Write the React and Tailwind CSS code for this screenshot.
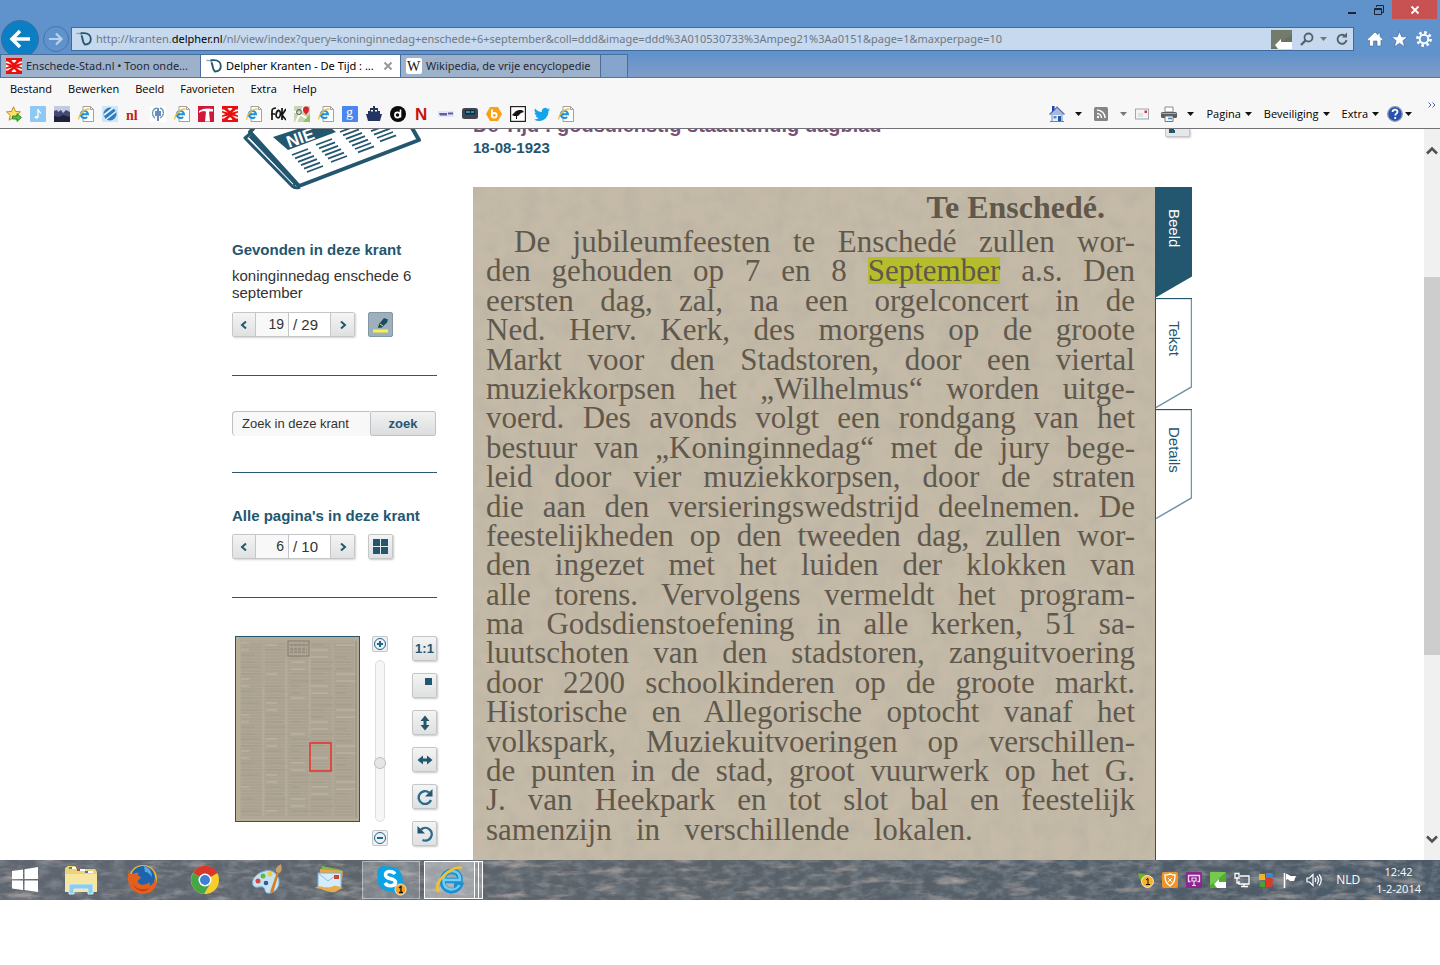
import { useState } from 'react';
import clsx from 'clsx';

const FAVORITES = [
  'star', 'note', 'photo', 'ie', 'swirl', 'nl', 'tree', 'ie', 'tred', 'cross', 'ie', 'fok',
  'maps', 'ie', 'google', 'ship', 'disc', 'nred', 'band', 'tv', 'hex', 'bird', 'twitter', 'ie',
];

const ARTICLE = [
  'den gehouden op 7 en 8 |September| a.s. Den',
  'eersten dag, zal, na een orgelconcert in de',
  'Ned. Herv. Kerk, des morgens op de groote',
  'Markt voor den Stadstoren, door een viertal',
  'muziekkorpsen het „Wilhelmus“ worden uitge-',
  'voerd. Des avonds volgt een rondgang van het',
  'bestuur van „Koninginnedag“ met de jury bege-',
  'leid door vier muziekkorpsen, door de straten',
  'die aan den versieringswedstrijd deelnemen. De',
  'feestelijkheden op den tweeden dag, zullen wor-',
  'den ingezet met het luiden der klokken van',
  'alle torens. Vervolgens vermeldt het program-',
  'ma Godsdienstoefening in alle kerken, 51 sa-',
  'luutschoten van den stadstoren, zanguitvoering',
  'door 2200 schoolkinderen op de groote markt.',
  'Historische en Allegorische optocht vanaf het',
  'volkspark, Muziekuitvoeringen op verschillen-',
  'de punten in de stad, groot vuurwerk op het G.',
  'J. van Heekpark en tot slot bal en feestelijk',
];

function IeMark() {
  return (
    <>
      <path d="M5 .5h7.500l3 3V15.500H5z" fill="#fdfdfd" stroke="#8c8c8c" strokeWidth=".8" />
      <path d="M12.500 .5v3h3" fill="none" stroke="#8c8c8c" strokeWidth=".8" />
      <path d="M3.200 8.300h6.800a3.600 3.600 0 1 0-.9 2.600" fill="none" stroke="#1e8fd8" strokeWidth="2" />
      <path d="M1 13.500C-.5 10 6 2.500 11.500 3" fill="none" stroke="#f0c030" strokeWidth="1.300" />
    </>
  );
}

function CrossMark() {
  return (
    <>
      <rect width="16" height="16" fill="#e8100c" />
      <path d="M0 3.500h2L6 6.500 0 5zM16 3.500h-2L10 6.500 16 5zM0 12.500h2L6 9.500 0 11zM16 12.500h-2L10 9.500l6 1.500z" fill="#fff" />
      <path d="M5.500 2h5L9 4.500H7zM5.500 14h5L9 11.500H7zM0 6.500L3.500 8 0 9.500zM16 6.500L12.500 8 16 9.500z" fill="#fff" />
    </>
  );
}

function FavIcon({ kind }) {
  return (
    <svg viewBox="0 0 16 16" className="size-4" aria-hidden="true">
      {kind === 'ie' && <IeMark />}
      {kind === 'star' && (
        <>
          <path d="M7.500 .8l2 4.600 5 .5-3.700 3.400 1 4.900-4.300-2.500-4.400 2.500 1.100-4.900L.5 5.900l5-.5z" fill="#fbe06a" stroke="#c78a1e" />
          <path d="M6.500 10h4.500V7.500l4.500 4-4.500 4V13H6.500z" fill="#4fc23a" stroke="#217a1c" strokeWidth=".8" />
        </>
      )}
      {kind === 'note' && (
        <>
          <rect width="16" height="16" rx="1" fill="#8ec8f4" />
          <path d="M8 3v8M8 3.500c.5 2 2.500 2 2.500 4" stroke="#fff" strokeWidth="1.300" fill="none" />
          <ellipse cx="6.600" cy="11.300" rx="1.800" ry="1.400" fill="#fff" />
        </>
      )}
      {kind === 'photo' && (
        <>
          <rect width="16" height="16" fill="#c3cbe4" />
          <path d="M0 5l3-1 1 2 3-2 2 3 3-3 4 2v10H0z" fill="#434a72" />
          <path d="M0 10l5 1 4-2 7 2v5H0z" fill="#20213a" />
        </>
      )}
      {kind === 'swirl' && (
        <>
          <rect width="16" height="16" rx="1" fill="#cfe6f6" />
          <circle cx="8" cy="8" r="6.500" fill="#2d7fc4" />
          <path d="M2 9L11 2M4 13.500l10-8" stroke="#e8f4fc" strokeWidth="1.600" />
        </>
      )}
      {kind === 'nl' && <text x="0" y="14" fontSize="14" fontWeight="700" fontFamily='"Liberation Serif", serif' fill="#c41f16">nl</text>}
      {kind === 'tree' && (
        <>
          <rect width="16" height="16" fill="#fff" />
          <path d="M5 12C1 9 2 3 7 2M10 12c5-3 4-9 0-10" stroke="#5da0bd" strokeWidth="1.300" fill="none" />
          <path d="M8 2v13M6 5v5M10 5v5" stroke="#35589a" strokeWidth="1.400" />
        </>
      )}
      {kind === 'tred' && (
        <>
          <rect width="16" height="16" fill="#d3173b" />
          <path d="M1 5c4-3 9-3 14-2v2.500h-4l1 10H7l1-10C5 5 3 5 1 7z" fill="#fff" />
        </>
      )}
      {kind === 'cross' && <CrossMark />}
      {kind === 'fok' && (
        <path d="M2 14V5c0-2 2-3 4-3M1 8h4M7 5c3-2 4 2 3 5s-4 2-4-1 1-4 3-5M12 2v12M16 3l-4 6 4 5" fill="none" stroke="#151515" strokeWidth="1.700" />
      )}
      {kind === 'maps' && (
        <>
          <rect width="16" height="16" rx="1" fill="#c9d4b0" />
          <path d="M0 5l16 9M2 16L10 0" stroke="#fff" strokeWidth="2" />
          <path d="M9 16l7-8v8z" fill="#8ec26b" />
          <path d="M12 9c-1-2-3-3-3-5.500a3 3 0 0 1 6 0C15 6 13 7 12 9z" fill="#d8232a" />
          <circle cx="5" cy="6" r="2.300" fill="none" stroke="#5d6b6f" strokeWidth="1.200" />
        </>
      )}
      {kind === 'google' && (
        <>
          <rect width="16" height="16" rx="1" fill="#4a86ef" />
          <text x="4" y="11" fontSize="14" fontFamily='"Liberation Serif", serif' fill="#fff">g</text>
        </>
      )}
      {kind === 'ship' && <path d="M7 0h2v2h3v3h2v3h2l-2 7H2L0 8h2V5h2V2h3zM5 4v1.500h2V4zm4 0v1.500h2V4z" fill="#233463" fillRule="evenodd" />}
      {kind === 'disc' && (
        <>
          <circle cx="8" cy="8" r="8" fill="#0a0a0a" />
          <circle cx="7.500" cy="9" r="2.600" fill="none" stroke="#fff" strokeWidth="1.600" />
          <path d="M10.500 3.500v8" stroke="#fff" strokeWidth="1.600" />
        </>
      )}
      {kind === 'nred' && <text x="1" y="14" fontSize="17" fontWeight="700" fontFamily='"Liberation Sans", sans-serif' fill="#c4150f">N</text>}
      {kind === 'band' && (
        <>
          <rect y="5" width="16" height="6" fill="#e4e4f2" />
          <path d="M1 7h8v2.500H2zM10 6.500h5v2h-5z" fill="#5d5fa9" />
        </>
      )}
      {kind === 'tv' && (
        <>
          <rect y="2" width="16" height="11" rx="2.500" fill="#3f4650" />
          <rect x="3" y="4" width="10" height="4.500" fill="#0d2b3a" />
          <path d="M4 6h4M9 6h3" stroke="#35b6e4" strokeWidth="1.500" />
        </>
      )}
      {kind === 'hex' && (
        <>
          <path d="M4 1h8l4 7-4 7H4L0 8z" fill="#f7a11a" />
          <path d="M6 3.500v8" stroke="#fff" strokeWidth="1.800" />
          <circle cx="8.300" cy="9.300" r="2.300" fill="none" stroke="#fff" strokeWidth="1.800" />
        </>
      )}
      {kind === 'bird' && (
        <>
          <rect x=".6" y=".6" width="14.800" height="14.800" fill="#fff" stroke="#222" strokeWidth="1.200" />
          <path d="M2 9l4-4 3-1h3l2 2-3 1-3 3H7v3H6v-3H4z" fill="#151515" />
        </>
      )}
      {kind === 'twitter' && (
        <path d="M16 3.400c-.6.3-1.200.4-1.900.5.700-.4 1.200-1 1.400-1.800-.6.400-1.300.6-2 .8A3.300 3.300 0 0 0 7.900 6 9.300 9.300 0 0 1 1.100 2.500a3.300 3.300 0 0 0 1 4.400c-.5 0-1-.2-1.500-.4 0 1.600 1.100 2.900 2.600 3.200-.5.100-1 .2-1.500.1.400 1.300 1.600 2.200 3.100 2.300A6.600 6.600 0 0 1 0 13.400 9.300 9.300 0 0 0 14.400 5.100c.6-.5 1.200-1 1.600-1.700z" fill="#17a4e6" />
      )}
    </svg>
  );
}

function DelpherMark() {
  return (
    <svg viewBox="0 0 16 16" className="size-4 shrink-0" aria-hidden="true">
      <path d="M.5 2.500C4 2 6 3 6.500 6c.3 3 1 6 2.500 7" fill="none" stroke="#7fa6b5" strokeWidth="1.400" />
      <path d="M4.500 2.200h3.500c4 0 6.800 2 6.800 5.800 0 3.500-2.500 5.500-6 5.500C6.500 12 7 8 5.500 4.500" fill="none" stroke="#23566f" strokeWidth="1.800" />
    </svg>
  );
}

function Caret({ muted }) {
  return (
    <svg viewBox="0 0 7 4" className="h-1 w-[7px] shrink-0" aria-hidden="true">
      <path d="M0 0h7L3.500 4z" fill={muted ? '#777' : '#111'} />
    </svg>
  );
}

function BrowserHeader() {
  return (
    <header className="relative shrink-0 bg-[#6092cb]">
      <div className="absolute right-[3px] top-0 flex">
        <button type="button" aria-label="Minimaliseren" className="flex h-[19px] w-[26px] items-center justify-center">
          <svg viewBox="0 0 12 12" className="size-3"><path d="M2 9h8" stroke="#1c2530" strokeWidth="2" /></svg>
        </button>
        <button type="button" aria-label="Verkleinen" className="flex h-[19px] w-[27px] items-center justify-center">
          <svg viewBox="0 0 12 12" className="size-3" fill="none" stroke="#1c2530">
            <path d="M1.500 4.500h7v6h-7zM1.500 5.500h7M3.500 3V1.500h7v7H9" />
          </svg>
        </button>
        <button type="button" aria-label="Sluiten" className="flex h-[19px] w-[45px] items-center justify-center bg-[#c85151]">
          <svg viewBox="0 0 10 10" className="size-2.5"><path d="M1.500 1.500l7 7M8.500 1.500l-7 7" stroke="#fff" strokeWidth="1.800" /></svg>
        </button>
      </div>

      <div className="flex h-[54px] items-end pb-[3px]">
        <div className="flex h-6 w-[71px] shrink-0 items-center gap-1 pl-px">
          <button type="button" aria-label="Terug" className="flex size-[38px] shrink-0 items-center justify-center rounded-full border border-[#3c6c9f] bg-[#0b7fc4]">
            <svg viewBox="0 0 24 24" className="size-6" fill="none" stroke="#fff" strokeWidth="3.500">
              <path d="M22 12H4M12 4l-8 8 8 8" />
            </svg>
          </button>
          <button type="button" aria-label="Vooruit" className="flex size-[26px] shrink-0 items-center justify-center rounded-full border border-[#4676ad]">
            <svg viewBox="0 0 16 16" className="size-4" fill="none" stroke="#b9d2ec" strokeWidth="2.200">
              <path d="M1 8h12M8 2.500L13.500 8 8 13.500" />
            </svg>
          </button>
        </div>
        <div className="flex h-6 min-w-0 flex-1 items-center border border-[#40699c] bg-[#c6d9ee] pl-1 font-['Noto_Sans',sans-serif] text-[11px] text-[#6e7884]">
          <DelpherMark />
          <div role="textbox" aria-label="Adres" className="ml-1 min-w-0 flex-1 truncate">
            http://kranten.<span className="text-black">delpher.nl</span>/nl/view/index?query=koninginnedag+enschede+6+september&amp;coll=ddd&amp;image=ddd%3A010530733%3Ampeg21%3Aa0151&amp;page=1&amp;maxperpage=10
          </div>
          <svg viewBox="0 0 21 19" className="mr-2 h-[19px] w-[21px]" aria-hidden="true">
            <rect width="21" height="19" fill="#69725f" />
            <path d="M0 0h21v4L4 17H0z" fill="#737c6c" />
            <path d="M4 15l6-6v3h11v7H7z" fill="#fff" />
          </svg>
          <button type="button" aria-label="Zoeken" className="flex items-center gap-1.5">
            <svg viewBox="0 0 14 14" className="size-3.5" fill="none" stroke="#56616e" strokeWidth="1.800">
              <circle cx="8.500" cy="5.500" r="4" />
              <path d="M5.500 8.500L1 13" strokeWidth="2.400" />
            </svg>
            <Caret muted />
          </button>
          <button type="button" aria-label="Vernieuwen" className="ml-2 mr-1">
            <svg viewBox="0 0 14 14" className="size-3.5" fill="none" stroke="#56616e" strokeWidth="1.900">
              <path d="M11.500 8A4.500 4.500 0 1 1 9.500 3.500" />
              <path d="M12 .5v5H7z" fill="#56616e" stroke="none" />
            </svg>
          </button>
        </div>
        <div className="flex h-6 w-[86px] shrink-0 items-center justify-end gap-2 pr-2">
          <button type="button" aria-label="Startpagina">
            <svg viewBox="0 0 16 16" className="size-4" fill="#fff" stroke="#3c6699" strokeWidth=".6">
              <path d="M8 1l3 2.800V2h2v3.600l3 2.900-1.300 1.300L14 9v6h-4v-5H6.500v5H2.500V9l-1 .8L0 8.500z" />
            </svg>
          </button>
          <button type="button" aria-label="Favorieten">
            <svg viewBox="0 0 16 16" className="size-[17px]" fill="#fff" stroke="#3c6699" strokeWidth=".6">
              <path d="M8 .5l2.100 5h5.600l-4.500 3.600 1.700 5.900L8 11.500 3.100 15l1.700-5.900L.3 5.500h5.600z" />
            </svg>
          </button>
          <button type="button" aria-label="Instellingen">
            <svg viewBox="0 0 16 16" className="size-4" fill="none" stroke="#fff">
              <circle cx="8" cy="8" r="4.300" strokeWidth="2" />
              <circle cx="8" cy="8" r="6.600" strokeWidth="2.600" strokeDasharray="2.600 2.580" />
            </svg>
          </button>
        </div>
      </div>

      <div className="relative flex h-6 border-b border-[#4a78ae] bg-linear-to-b from-[#6092cb] to-[#809cc6] font-['Noto_Sans',sans-serif] text-[11px] text-[#1f2a36]" role="tablist">
        <button type="button" role="tab" className="flex w-[201px] items-center gap-1 border border-b-0 border-[#466f9e] bg-[#9eb1cb] pl-[5px]">
          <svg viewBox="0 0 16 16" className="size-4 shrink-0" aria-hidden="true"><CrossMark /></svg>
          <span>Enschede-Stad.nl • Toon onde...</span>
        </button>
        <div className="flex w-[199px] items-center border-t border-[#466f9e] bg-white pl-[5px] pr-1 text-black">
          <button type="button" role="tab" aria-selected="true" className="flex flex-1 items-center gap-1 whitespace-nowrap">
            <DelpherMark />
            <span>Delpher Kranten - De Tijd : ...</span>
          </button>
          <button type="button" aria-label="Tabblad sluiten" className="p-1">
            <svg viewBox="0 0 8 8" className="size-2"><path d="M.5 .5l7 7M7.500 .5l-7 7" stroke="#999" strokeWidth="2" /></svg>
          </button>
        </div>
        <button type="button" role="tab" className="flex w-[201px] items-center gap-1 border border-b-0 border-[#466f9e] bg-[#9eb1cb] pl-[5px]">
          <svg viewBox="0 0 16 16" className="size-4 shrink-0" aria-hidden="true">
            <rect width="16" height="16" rx="2" fill="#fff" />
            <text x="1" y="13" fontSize="14" fontFamily='"Liberation Serif", serif' fill="#111">W</text>
          </svg>
          <span>Wikipedia, de vrije encyclopedie</span>
        </button>
        <button type="button" aria-label="Nieuw tabblad" className="w-[27px] border border-b-0 border-l-0 border-[#466f9e] bg-[#86a5cc]" />
      </div>

      <div className="border-b border-[#707278] bg-[#f7f7f7] text-[11px] text-black">
        <nav className="flex h-[22px] items-center gap-4 px-2.5">
          {['Bestand', 'Bewerken', 'Beeld', 'Favorieten', 'Extra', 'Help'].map((item) => (
            <button key={item} type="button">{item}</button>
          ))}
        </nav>
        <div className="flex h-7 items-center pl-1.5 pr-1">
          <div className="flex flex-1 gap-2">
            {FAVORITES.map((kind, i) => (
              <button key={i} type="button" aria-label={`Favoriet ${i + 1}`}><FavIcon kind={kind} /></button>
            ))}
          </div>
          <CommandBar />
        </div>
      </div>
    </header>
  );
}

function CommandBar() {
  return (
    <div className="flex items-center gap-3">
      <button type="button" aria-label="Startpagina" className="flex items-center gap-2.5">
        <svg viewBox="0 0 16 16" className="size-4">
          <path d="M3 8h10v7.500H3z" fill="#e8eefb" stroke="#7d8bb5" />
          <path d="M.5 8.500L8 1l7.500 7.500" fill="#a9b8e0" stroke="#5b6ca8" strokeWidth="1.200" />
          <path d="M3 0h2.500v4L3 6z" fill="#2741b0" />
          <path d="M9 10h3v5.500H9z" fill="#1c57a8" />
          <path d="M4.500 10h3v2.500h-3z" fill="#4f8fd9" />
          <path d="M1 15.500h14" stroke="#5d9b52" />
        </svg>
        <Caret />
      </button>
      <button type="button" aria-label="Feeds" className="flex items-center gap-3">
        <svg viewBox="0 0 14 14" className="size-3.5">
          <rect width="14" height="14" rx="1.500" fill="#858585" />
          <g fill="none" stroke="#fff" strokeWidth="1.500"><path d="M3 6.500a4.500 4.500 0 0 1 4.500 4.500M3 3a8 8 0 0 1 8 8" /></g>
          <circle cx="4" cy="10" r="1.200" fill="#fff" />
        </svg>
        <Caret muted />
      </button>
      <button type="button" aria-label="Mail" className="-ml-1">
        <svg viewBox="0 0 14 12" className="h-3 w-3.5">
          <rect x=".5" y="1" width="13" height="10" fill="#f4f4f6" stroke="#a3a6ac" />
          <path d="M3 6h5M3 8h5" stroke="#c8cdd6" />
          <rect x="9.500" y="2.500" width="2.500" height="2.500" fill="#d0353b" />
        </svg>
      </button>
      <button type="button" aria-label="Afdrukken" className="flex items-center gap-2.5">
        <svg viewBox="0 0 16 16" className="size-4">
          <path d="M4 1h8v5H4z" fill="#fff" stroke="#8a8a8a" />
          <rect y="6" width="16" height="6" rx="1.500" fill="#5a5d60" />
          <path d="M1 7.500h14" stroke="#a7abae" />
          <path d="M4 10h8v5.500H4z" fill="#f2f8ff" stroke="#777" />
          <path d="M7 12.500h4" stroke="#3a8fd0" strokeWidth="1.600" />
        </svg>
        <Caret />
      </button>
      {['Pagina', 'Beveiliging', 'Extra'].map((item) => (
        <button key={item} type="button" className="flex items-center gap-1">
          {item}
          <Caret />
        </button>
      ))}
      <button type="button" aria-label="Help" className="-ml-1 flex items-center gap-0.5">
        <svg viewBox="0 0 16 16" className="size-4">
          <circle cx="8" cy="8" r="7.300" fill="#2b50b4" stroke="#8d98ad" strokeWidth="1.300" />
          <path d="M5.500 6c0-3.300 5.200-3 5 0-.1 1.700-2.300 1.700-2.300 3.600M8.200 11v2" fill="none" stroke="#fff" strokeWidth="1.800" />
        </svg>
        <Caret />
      </button>
      <button type="button" aria-label="Meer" className="ml-1 self-start">
        <svg viewBox="0 0 8 6" className="-mt-1 h-1.5 w-2" fill="none" stroke="#5566a8"><path d="M.5 .5L3 3 .5 5.500M4.500 .5L7 3 4.500 5.500" /></svg>
      </button>
    </div>
  );
}

// [x, y] of the first rule in each printed column and how many rules it has
const PRINT_COLUMNS = [[60, 26, 6], [84, 16, 6], [108, 3, 7], [130, -8, 7]];

function NewspaperDrawing() {
  return (
    <svg viewBox="0 0 205 62" className="block h-[62px] w-[205px]" aria-hidden="true">
      <g fill="none" stroke="#23566f" strokeLinejoin="round">
        <path d="M26-6L18 3l49 54L187 11 176-8" strokeWidth="4" />
        <path d="M19 4l-6 5 47 48q3 3 8 1" strokeWidth="3" />
        <path d="M18 7l46 49" strokeWidth="4" />
      </g>
      <path d="M17 9l44 46" stroke="#fff" />
      <path d="M41 8l15 13 48-18L90-8z" fill="#23566f" />
      <text x="57" y="19" transform="rotate(-20 57 19)" fontSize="17" fontWeight="700" fontFamily='"Liberation Sans", sans-serif' fill="#fff">NIE</text>
      {PRINT_COLUMNS.map(([x, y, count]) =>
        Array.from({ length: count }, (_, i) => (
          <path key={`${x}-${i}`} d={`M${x + i * 3} ${y + i * 3.4}l16-6`} stroke="#23566f" strokeWidth="1.800" />
        ))
      )}
    </svg>
  );
}

const toolButton =
  'flex size-[25px] shrink-0 items-center justify-center rounded-xs border border-[#c4c6c8] bg-linear-to-b from-[#f4f4f4] to-[#dfe0e1] shadow-[1px_1px_2px_#c8c8c8]';

function Pager({ id, label, value, total, children }) {
  const [page, setPage] = useState(value);
  return (
    <div className="flex items-center gap-[13px]">
      <div className="flex h-[25px] w-[123px] rounded-xs border border-[#c4c6c8] text-[15px] text-[#333] shadow-[1px_1px_2px_#d4d4d4]">
        <button type="button" aria-label="Vorige" onClick={() => setPage(Math.max(1, page - 1))} className="flex w-[22px] items-center justify-center bg-linear-to-b from-[#f4f4f4] to-[#dfe0e1]">
          <svg viewBox="0 0 8 8" className="size-2" fill="none" stroke="#23566f" strokeWidth="2"><path d="M6 .5L2 4l4 3.500" /></svg>
        </button>
        <label htmlFor={id} className="sr-only">{label}</label>
        <input
          id={id}
          value={page}
          onChange={(e) => setPage(Number(e.target.value) || 1)}
          className="w-[34px] border-x border-[#c4c6c8] bg-[#f8f8f8] pr-1 text-right text-[14px] outline-none"
        />
        <span className="flex-1 pl-1 leading-[23px]">/ {total}</span>
        <button type="button" aria-label="Volgende" onClick={() => setPage(Math.min(total, page + 1))} className="flex w-6 items-center justify-center border-l border-[#c4c6c8] bg-linear-to-b from-[#f4f4f4] to-[#dfe0e1]">
          <svg viewBox="0 0 8 8" className="size-2" fill="none" stroke="#23566f" strokeWidth="2"><path d="M2 .5L6 4 2 7.500" /></svg>
        </button>
      </div>
      {children}
    </div>
  );
}

function Thumbnail() {
  const rules = Array.from({ length: 130 }, (_, i) => ({
    x: 5 + (i % 5) * 23 + ((i * 7) % 5),
    y: 6 + ((i * 37 + (i % 5) * 11) % 173),
    w: 8 + ((i * 13) % 15),
    light: i % 3 === 0,
  }));
  return (
    <a href="#pagina" aria-label="Paginaoverzicht" className="ml-[3px] block h-[186px] w-[125px] shrink-0 border border-[#23566f] bg-[#b5ac98]">
      <svg viewBox="0 0 123 184" className="block size-full">
        <rect x="4" y="3" width="117" height="179" fill="#b0a797" />
        <path d="M0 0h4v184H0zM0 182h123v2H0z" fill="#b8af95" />
        {Array.from({ length: 58 }, (_, i) => (
          <path key={i} d={`M6 ${7 + i * 3}h113`} stroke="#a69e8d" strokeDasharray="20 3" />
        ))}
        {rules.map((r, i) => (
          <path key={i} d={`M${r.x} ${r.y}h${r.w}`} stroke={r.light ? '#c0b8a7' : '#a39a8a'} />
        ))}
        <path d="M27 50v130M50 20v160M74 6v90" stroke="#b8af9f" />
        <path d="M120 4v176" stroke="#968c78" />
        <rect x="52" y="4" width="21" height="15" fill="none" stroke="#857b6c" />
        <path d="M54 8h17M54 12h17M54 15h17" stroke="#847b6d" strokeDasharray="3 1" />
        <rect x="74" y="106" width="21" height="28" fill="none" stroke="#e8312a" strokeWidth="1.500" />
      </svg>
    </a>
  );
}

function ZoomTools() {
  const [zoom, setZoom] = useState(65);
  return (
    <div className="mt-[38px] flex">
      <Thumbnail />
      <div className="ml-3 flex w-4 flex-col items-center gap-2">
        <button type="button" aria-label="Inzoomen" className="size-4 rounded-xs border border-[#c4c6c8] bg-[#eef0f1]">
          <svg viewBox="0 0 14 14" fill="none" stroke="#23668c"><circle cx="7" cy="7" r="5.500" /><path d="M7 4v6M4 7h6" strokeWidth="2" /></svg>
        </button>
        <label htmlFor="zoom" className="sr-only">Zoom</label>
        <input
          id="zoom"
          type="range"
          min="0"
          max="100"
          value={zoom}
          onChange={(e) => setZoom(Number(e.target.value))}
          className="h-[162px] w-3 appearance-none bg-transparent [writing-mode:vertical-lr] [&::-webkit-slider-runnable-track]:w-2.5 [&::-webkit-slider-runnable-track]:rounded-full [&::-webkit-slider-runnable-track]:border [&::-webkit-slider-runnable-track]:border-[#dedede] [&::-webkit-slider-runnable-track]:bg-[#f6f6f6] [&::-webkit-slider-thumb]:-ml-0.5 [&::-webkit-slider-thumb]:size-3 [&::-webkit-slider-thumb]:appearance-none [&::-webkit-slider-thumb]:rounded-full [&::-webkit-slider-thumb]:border [&::-webkit-slider-thumb]:border-[#bdbdbd] [&::-webkit-slider-thumb]:bg-[#e6e6e6]"
        />
        <button type="button" aria-label="Uitzoomen" className="size-4 rounded-xs border border-[#c4c6c8] bg-[#eef0f1]">
          <svg viewBox="0 0 14 14" fill="none" stroke="#23668c"><circle cx="7" cy="7" r="5.500" /><path d="M4 7h6" strokeWidth="2" /></svg>
        </button>
      </div>
      <div className="ml-6 flex flex-col gap-3">
        <button type="button" className={clsx(toolButton, 'text-[13px] font-bold text-[#23566f]')}>1:1</button>
        <button type="button" aria-label="Overzicht" className={toolButton}>
          <svg viewBox="0 0 16 16" className="size-4"><path d="M8 0h7v7H8z" fill="#23566f" /></svg>
        </button>
        <button type="button" aria-label="Hoogte passend" className={toolButton}>
          <svg viewBox="0 0 16 16" className="size-4"><path d="M8 .5L12.500 6h-3v4h3L8 15.500 3.500 10h3V6h-3z" fill="#23566f" /></svg>
        </button>
        <button type="button" aria-label="Breedte passend" className={toolButton}>
          <svg viewBox="0 0 16 16" className="size-4"><path d="M.5 8L6 3.500v3h4v-3L15.500 8 10 12.500v-3H6v3z" fill="#23566f" /></svg>
        </button>
        <button type="button" aria-label="Rechtsom draaien" className={toolButton}>
          <svg viewBox="0 0 16 16" className="size-4"><path d="M14 11A6.400 6.400 0 1 1 12 3.500" fill="none" stroke="#2a6a8c" strokeWidth="2.400" /><path d="M15.500 0v7.500H8z" fill="#23566f" /></svg>
        </button>
        <button type="button" aria-label="Linksom draaien" className={toolButton}>
          <svg viewBox="0 0 16 16" className="size-4"><path d="M5.500 14A6.400 6.400 0 1 0 4 3.500" fill="none" stroke="#2a6a8c" strokeWidth="2.400" /><path d="M.5 0v7.500H8z" fill="#23566f" /></svg>
        </button>
      </div>
    </div>
  );
}

function Sidebar() {
  return (
    <aside className="w-[205px] shrink-0 text-[15px] text-[#333]">
      <NewspaperDrawing />
      <h2 className="mt-[49px] font-bold leading-5 text-[#23566f]">Gevonden in deze krant</h2>
      <p className="mb-[11px] mt-[7px] leading-[17px]">koninginnedag enschede 6 september</p>
      <Pager id="hit" label="Resultaat" value={19} total={29}>
        <button type="button" aria-label="Markeren" className="flex size-[25px] items-center justify-center rounded-xs border border-[#8397a5] bg-[#9eb0bc]">
          <svg viewBox="0 0 18 18" className="size-[18px]">
            <path d="M1 13.500h15v3H1z" fill="#f6f24b" />
            <path d="M6 12l1-4 5-6 4 1.500-1 3-5 5z" fill="#1d4a63" />
            <path d="M8 8l3 2" stroke="#dfe65a" />
          </svg>
        </button>
      </Pager>
      <hr className="mt-[38px] border-[#2c5a73]" />
      <form className="mt-[35px] flex h-[25px] text-[13px]" onSubmit={(e) => e.preventDefault()}>
        <label htmlFor="zoek" className="sr-only">Zoek in deze krant</label>
        <input
          id="zoek"
          defaultValue="Zoek in deze krant"
          className="w-[138px] rounded-l-[4px] border border-b-0 border-r-0 border-[#c0c0c0] bg-[#f8f8f8] px-[9px] outline-none"
        />
        <button type="submit" className="w-[66px] rounded-xs border border-[#bfc1c3] bg-linear-to-b from-[#f2f2f2] to-[#dcdddf] font-bold text-[#23566f]">zoek</button>
      </form>
      <hr className="mt-9 border-[#2c5a73]" />
      <h2 className="mb-2 mt-[33px] font-bold leading-5 text-[#23566f]">Alle pagina's in deze krant</h2>
      <Pager id="page" label="Pagina" value={6} total={10}>
        <button type="button" aria-label="Alle pagina's" className={toolButton}>
          <svg viewBox="0 0 15 15" className="size-[15px]" fill="#23566f"><path d="M0 0h7v7H0zM8 0h7v7H8zM0 8h7v7H0zM8 8h7v7H8z" /></svg>
        </button>
      </Pager>
      <hr className="mt-[38px] border-[#2c5a73]" />
      <ZoomTools />
    </aside>
  );
}

function ArticleLine({ text }) {
  const [before, hit, after] = text.split('|');
  return (
    <span className="block h-[29px] whitespace-nowrap [text-align-last:justify]">
      {before}
      {hit && <mark className="inline-block h-[27px] bg-[#b6bd2c] leading-[27px] text-inherit">{hit}</mark>}
      {after}
    </span>
  );
}

function Grain({ id, frequency, matrix }) {
  return (
    <svg className="pointer-events-none absolute inset-0 size-full" aria-hidden="true">
      <filter id={id} x="0" y="0" width="100%" height="100%">
        <feTurbulence type="fractalNoise" baseFrequency={frequency} numOctaves="4" seed="4" />
        <feColorMatrix values={matrix} />
      </filter>
      <rect width="100%" height="100%" filter={`url(#${id})`} />
    </svg>
  );
}

function Scan() {
  return (
    <article className="relative h-[674px] w-[682px] shrink-0 overflow-hidden bg-[#c4baa7] font-['Liberation_Serif',serif] text-[31px] text-[#61584c]">
      <Grain id="paper" frequency="0.06" matrix="0 0 0 0 .42  0 0 0 0 .38  0 0 0 0 .34  .6 0 0 0 -.22" />
      <div className="relative pl-[13px] pr-5">
        <h3 className="pr-[30px] text-right text-[32px] font-bold leading-10">Te Enschedé.</h3>
        <p className="flex h-[617px] flex-col justify-between leading-[29px]">
          <span className="block h-[29px] whitespace-nowrap pl-7 [text-align-last:justify]">De jubileumfeesten te Enschedé zullen wor-</span>
          {ARTICLE.map((line) => <ArticleLine key={line} text={line} />)}
          <span className="block h-[29px] w-3/4 whitespace-nowrap [text-align-last:justify]">samenzijn in verschillende lokalen.</span>
        </p>
      </div>
    </article>
  );
}

function ViewTabs() {
  const [active, setActive] = useState('Beeld');
  return (
    <div className="flex flex-1 flex-col gap-px border-l border-[#23566f]" role="tablist">
      {['Beeld', 'Tekst', 'Details'].map((name) => {
        const on = name === active;
        return (
          <button
            key={name}
            type="button"
            role="tab"
            aria-selected={on}
            onClick={() => setActive(name)}
            className={clsx('relative flex h-[110px] w-9 items-start text-[15px]', on ? 'text-white' : 'text-[#23566f]')}
          >
            <svg viewBox="0 0 36 110" className="absolute inset-0 size-full" aria-hidden="true">
              <path d="M0 .5h35.500v88.500L0 109.500" fill={on ? '#23566f' : '#fff'} stroke={on ? '#23566f' : '#6f94a6'} strokeWidth="1.500" />
              <path d="M0 .5h36" stroke="#23566f" />
            </svg>
            <span className="relative flex h-[82px] w-full items-center justify-center [writing-mode:vertical-rl]">{name}</span>
          </button>
        );
      })}
    </div>
  );
}

function Scrollbar() {
  return (
    <div className="flex w-4 shrink-0 flex-col bg-[#f0f0f0]">
      <button type="button" aria-label="Omhoog" className="flex h-[42px] items-center justify-center">
        <svg viewBox="0 0 12 9" className="h-[9px] w-3" fill="none" stroke="#505050" strokeWidth="2.600"><path d="M1 7.500l5-5 5 5" /></svg>
      </button>
      <div className="flex flex-1 flex-col">
        <div className="flex-[106]" />
        <div className="flex-[378] bg-[#cdcdcd]" />
        <div className="flex-[163]" />
      </div>
      <button type="button" aria-label="Omlaag" className="flex h-[42px] items-center justify-center">
        <svg viewBox="0 0 12 9" className="h-[9px] w-3" fill="none" stroke="#505050" strokeWidth="2.600"><path d="M1 1.500l5 5 5-5" /></svg>
      </button>
    </div>
  );
}

function SkypeIcon() {
  return (
    <svg viewBox="0 0 32 32" className="size-8">
      <circle cx="15" cy="15" r="12.500" fill="#0aa3e6" />
      <circle cx="9" cy="9" r="7" fill="#0aa3e6" />
      <circle cx="21" cy="21" r="8" fill="#0aa3e6" />
      <path d="M20 10c-3-4-10-3-9.500 1 .5 5 9.500 2.500 10 7 .3 4.500-8 5-10.500 1" fill="none" stroke="#fff" strokeWidth="3.500" />
      <circle cx="25.500" cy="25.500" r="5.500" fill="#f9a01e" stroke="#fff" strokeWidth=".8" />
      <path d="M24 24l2-1.500v6M24 28.500h4" stroke="#111" strokeWidth="1.300" fill="none" />
    </svg>
  );
}

function Taskbar() {
  return (
    <footer className="relative flex h-10 shrink-0 overflow-hidden bg-linear-to-r from-[#5f6670] via-[#5b6268] to-[#4a5a68] font-['Open_Sans',sans-serif] text-[11px] text-white">
      <Grain id="ground" frequency="0.08 0.14" matrix="0 0 0 0 .2  0 0 0 0 .23  0 0 0 0 .26  2 0 0 0 -.8" />
      <Grain id="soil" frequency="0.03 0.12" matrix="0 0 0 0 .5  0 0 0 0 .43  0 0 0 0 .4  0 2 0 0 -1.100" />
      <div className="relative flex flex-1 items-center">
        <button type="button" aria-label="Start" className="flex w-[50px] justify-center">
          <svg viewBox="0 0 26 26" className="size-[26px]" fill="#fff"><path d="M0 4l11-1.500V12H0zM12.500 2.200L26 0v12H12.500zM0 13.500h11v9.500L0 21.500zM12.500 13.500H26V25l-13.500-2z" /></svg>
        </button>
        <button type="button" aria-label="Verkenner" className="flex w-[62px] justify-center">
          <svg viewBox="0 0 32 30" className="h-[30px] w-8">
            <path d="M0 3l3-2h7l2 3h18l2 3v20H0z" fill="#ecd27d" />
            <path d="M4 2h7v2H4zM12 4h8v2h-8zM20 6h8v2h-8z" fill="#fff" />
            <path d="M4 2h3v2H4z" fill="#3fa040" /><path d="M12 4h3v2h-3z" fill="#c0462c" /><path d="M20 6h3v2h-3z" fill="#3a78c0" />
            <path d="M0 9h32v18H0z" fill="#f7e6a0" />
            <path d="M4 19h24v10h-5v-5H9v5H4z" fill="#8fcdec" stroke="#cfeefb" />
          </svg>
        </button>
        <button type="button" aria-label="Firefox" className="flex w-[62px] justify-center">
          <svg viewBox="0 0 32 32" className="size-8">
            <circle cx="16" cy="15" r="14" fill="#f2b632" />
            <circle cx="16" cy="14" r="12" fill="#1f63ae" />
            <path d="M17 2c6 2 8 6 8 11-2-3-4-5-7-5z" fill="#57a7dd" />
            <path d="M2 7c0 3 1 3 3 3s3-2 7-1c-2 2-1 3 2 4-1 3-4 3-3 5 2 4 7 3 10 1 2-1 3 1 1 3 4-1 6-5 6-9 5 9-3 17-12 17C5 30-2 19 2 7z" fill="#e3601c" />
            <path d="M5 17c2 8 10 10 17 7-3 5-14 5-17-7z" fill="#c63b16" />
          </svg>
        </button>
        <button type="button" aria-label="Chrome" className="flex w-[62px] justify-center">
          <svg viewBox="0 0 32 32" className="size-8">
            <circle cx="16" cy="16" r="14" fill="#f8ce2c" />
            <path d="M16 16L4 9a14 14 0 0 1 24.500 0z" fill="#d8372c" />
            <path d="M16 16L4 9a14 14 0 0 0 11 21l6-10z" fill="#44a648" />
            <circle cx="16" cy="16" r="6.500" fill="#fff" />
            <circle cx="16" cy="16" r="5" fill="#3f7fd6" />
          </svg>
        </button>
        <button type="button" aria-label="Paint" className="flex w-[62px] justify-center">
          <svg viewBox="0 0 32 32" className="size-8">
            <path d="M14 7c8-2 14 4 14 11s-6 12-12 11c-3-1-1-5-4-6-4-1-8 2-10-2C0 15 6 9 14 7z" fill="#c6e3f4" stroke="#86b6d5" />
            <circle cx="7" cy="17" r="2.500" fill="#d8473c" /><circle cx="12" cy="12" r="2.500" fill="#62b64b" />
            <circle cx="19" cy="10" r="2.500" fill="#efca3c" /><circle cx="15" cy="19" r="2.300" fill="#315c92" />
            <path d="M26 8l2 1-6 20-3-1z" fill="#d67c26" />
            <path d="M25 8c-1-4 2-6 5-8 1 4 1 8-2 9z" fill="#c8a06a" />
          </svg>
        </button>
        <button type="button" aria-label="Mail" className="flex w-16 justify-center">
          <svg viewBox="0 0 32 32" className="size-8">
            <path d="M8 2l20 4-3 17L5 19z" fill="#7cba4a" />
            <path d="M6 5l23 2-2 17H5z" fill="#f3a33c" />
            <path d="M4 9h23v15H4z" fill="#d7ecfa" stroke="#7aaed4" />
            <path d="M4 9l10 8 7-5" fill="none" stroke="#8dbbdb" />
            <path d="M20 11h5v4h-5z" fill="#c34a33" />
            <path d="M1 24c7-5 10 3 16-1 5-3 8 0 13 1-5 0-6 5-13 4-8-1-9-4-16-4z" fill="#e9ad4d" />
          </svg>
        </button>
        <button type="button" aria-label="Skype" className="flex h-[38px] w-[58px] items-center justify-center border border-white/40 bg-white/20"><SkypeIcon /></button>
        <button type="button" aria-label="Internet Explorer" className="ml-1 flex h-[38px] w-[51px] items-center justify-center border border-white bg-white/40">
          <svg viewBox="0 0 32 32" className="size-8">
            <path d="M9 16.500h17c1-12.500-17-12.500-17.500 0-.5 12 14 13 17.500 5h-6" fill="none" stroke="#1d8fd0" strokeWidth="5.500" />
            <path d="M9 16h17c1-12-16-12-16.500 0-.5 11 12 12 16 5" fill="none" stroke="#73cdf2" strokeWidth="2.500" />
            <path d="M5 28C-3 21 17 0 28 4" fill="none" stroke="#f2c22d" strokeWidth="2.600" />
          </svg>
        </button>
        <span className="h-[38px] w-1 border-y border-r border-white bg-white/30" />
        <span className="h-[38px] w-1 border-y border-r border-white bg-white/30" />
      </div>
      <div className="relative flex items-center gap-2 pr-[19px]">
        <svg viewBox="0 0 16 16" className="size-4"><path d="M0 1l9 2 4 9-10-2z" fill="#6fb51f" /><circle cx="9.500" cy="9.500" r="6" fill="#f9b22a" stroke="#fff" strokeWidth=".8" /><path d="M8 8l2-1.500v6M8 12.500h4" stroke="#111" fill="none" /></svg>
        <svg viewBox="0 0 16 16" className="size-4"><rect width="16" height="16" rx="2" fill="#ef9427" /><path d="M3 3c3 0 4-1 5-1s2 1 5 1c0 6-1 8-5 11-4-3-5-5-5-11z" fill="none" stroke="#fff" strokeWidth="1.300" /><path d="M6 6l4 4M10 6l-4 4" stroke="#fff" /></svg>
        <svg viewBox="0 0 16 16" className="size-4"><rect width="16" height="16" rx="1.500" fill="#8b2691" /><path d="M4.500 9.500h-2v-6h11v6h-2" fill="none" stroke="#f0dff2" strokeWidth="1.300" /><path d="M6 6h4v3H6zM8 9v5M6 13.500h4" fill="none" stroke="#f0dff2" strokeWidth="1.200" /></svg>
        <svg viewBox="0 0 16 16" className="size-4"><rect width="16" height="16" fill="#4fae2f" /><path d="M0 0h16L5 10 0 13z" fill="#77c84e" /><path d="M4 12l5-5v3h7v6H7z" fill="#fff" /></svg>
        <svg viewBox="0 0 16 16" className="size-4" fill="none" stroke="#fff" strokeWidth="1.300"><path d="M6 4h9v8H5V9M7 14.500h7M10 12v2M1 1.500h4V6H1zM3 6v5h2" /></svg>
        <svg viewBox="0 0 16 16" className="size-4"><path d="M1 2h6v6H1z" fill="#f1b12c" /><path d="M8 1h7l-1 7H8z" fill="#3a8ad5" /><path d="M1 9h6v6H2z" fill="#4a9f3b" /><path d="M8 6c3-1 6 0 7 1l-1 8H8z" fill="#d93c28" /></svg>
        <svg viewBox="0 0 16 16" className="size-4"><path d="M2.500 1v15" stroke="#fff" strokeWidth="1.600" /><path d="M4 2c3 0 3 2 6 2h4l-2 5H8c-2-2-3-2-4-1z" fill="#fff" /></svg>
        <svg viewBox="0 0 16 16" className="size-4" fill="none" stroke="#fff" strokeWidth="1.200"><path d="M1 6h2.500L7 2.500v11L3.500 10H1z" /><path d="M9 6c1 1 1 3 0 4M11 4c2 2 2 6 0 8M13 2.500c3 3 3 8 0 11" /></svg>
        <span className="ml-1.5 text-[12px]">NLD</span>
        <p className="ml-2 text-center leading-[17px]">
          12:42
          <br />
          1-2-2014
        </p>
      </div>
    </footer>
  );
}

export default function App() {
  return (
    <div className="flex h-screen flex-col bg-white pb-[65px] font-['Open_Sans',sans-serif]">
      <BrowserHeader />
      <div className="flex min-h-0 flex-1 overflow-hidden">
        <main className="min-w-0 flex-1 overflow-hidden font-['Liberation_Sans',Arial,sans-serif]">
          <div className="mx-auto flex max-w-[960px] gap-9">
            <Sidebar />
            <div className="min-w-0 flex-1">
              <div className="flex h-[58px] justify-between">
                <div className="text-[#23566f]">
                  <h1 className="-mt-4 text-[20px] font-bold leading-6 text-[#7d4f78]">De Tijd : godsdienstig staatkundig dagblad</h1>
                  <p className="mt-px text-[15px] font-bold leading-5">18-08-1923</p>
                </div>
                <button type="button" aria-label="Volledig scherm" className="mr-0.5 flex h-2 w-[25px] items-start rounded-b-xs border border-t-0 border-[#c4c6c8] bg-[#e6e7e8] pl-0.5 shadow-[1px_1px_2px_#c8c8c8]">
                  <svg viewBox="0 0 8 4" className="h-1 w-2"><path d="M1 0h5v1h1v3H1z" fill="#23566f" /></svg>
                </button>
              </div>
              <div className="flex">
                <Scan />
                <ViewTabs />
              </div>
            </div>
          </div>
        </main>
        <Scrollbar />
      </div>
      <Taskbar />
    </div>
  );
}
